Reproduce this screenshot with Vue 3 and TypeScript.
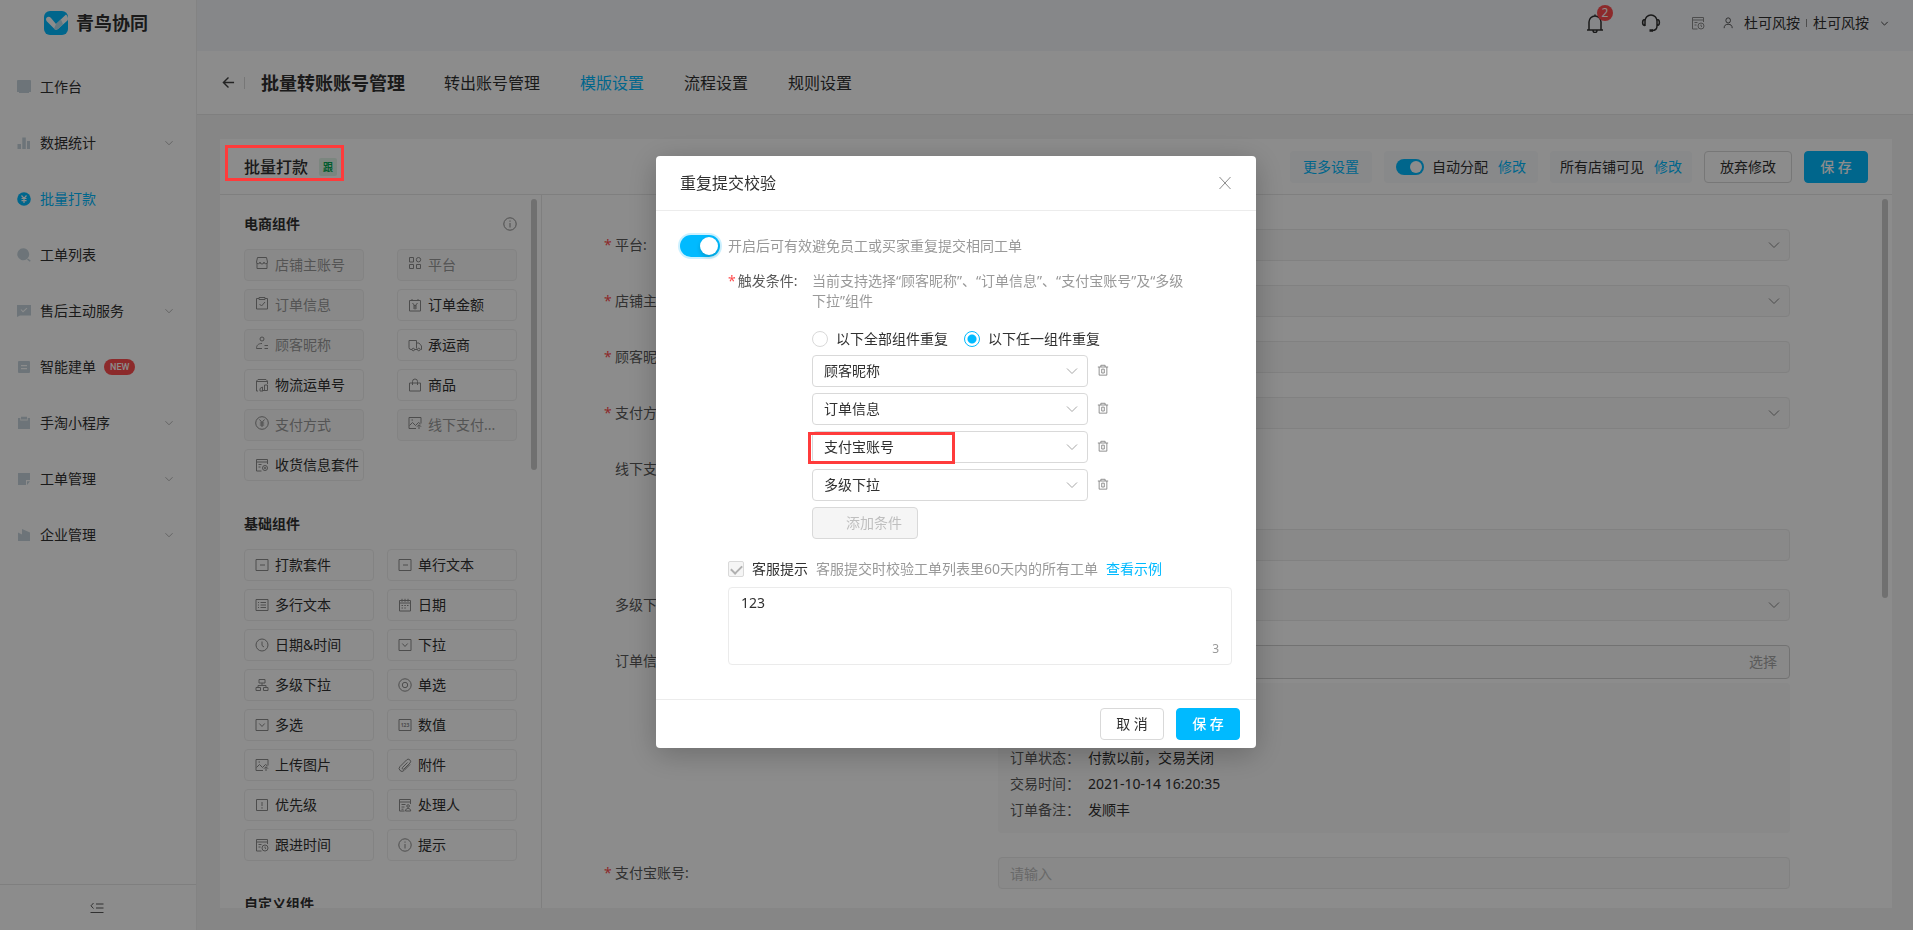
<script setup lang="ts">
import { h, ref } from 'vue'

const glyphs: Record<string, string> = {
  shop: 'M2.500 1.500h9l1 4.500a1.500 1.500 0 0 1-3.500 0 2 2 0 0 1-4 0 1.500 1.500 0 0 1-3.500 0zM2 7V12.500h10V7',
  grid: 'M1.500 1.500H5.500V6H1.500zM8.300 3.700a2.200 2.200 0 1 0 4.400 0a2.200 2.200 0 1 0-4.400 0M1.500 8.500H5.500V12.500H1.500zM8.500 8.500H12.500V12.500H8.500z',
  order: 'M4 2.500H1.500v10.500h11V2.500H10M4 1.500h6V3.500H4zM4.500 8l2 2 3.500-4',
  money: 'M1.500 2.500h11V13h-11zM4 1v2M10 1v2M4.500 5L7 8l2.500-3M7 8v3.500M5 8h4M5 10h4',
  person: 'M5 3a2 2 0 1 0 4 0a2 2 0 1 0-4 0M7 7.500c-4 0-5.500 2-5.500 5H7M9.500 9.500H13M9.500 12.500H13',
  truck: 'M4 11.500H3A2 2 0 0 1 1 9.500v-7h7.500v8M6.500 11.500h3M8.500 5h2.500l2.500 3v3.500h-1M4 11.500a1.200 1.200 0 1 0 2.500 0a1.200 1.200 0 1 0-2.500 0M9.500 11.500a1.300 1.300 0 1 0 2.600 0a1.300 1.300 0 1 0-2.600 0',
  parcel: 'M3 13H1.500V3L3 1.500h8L12.500 3v3M1.500 3.500h11M5 13v-2.500l2.500-1.500v4M7.500 12.500h5V7h-3v5M5 13h3',
  bag: 'M1.500 5h11v8h-11zM4.500 7V3.500a2.500 2.500 0 0 1 5 0V7',
  yen: 'M.7 7a6.300 6.300 0 1 0 12.600 0a6.300 6.300 0 1 0-12.600 0M4.500 3.500L7 6.500l2.500-3M7 6.500V11M4.800 7h4.400M4.800 9h4.400',
  image: 'M8 12.500H1V1.500h12v6M1.500 9.500l3-3 3 3 3-3 2 1.500M3.500 4h1.500M11 13V9M9 10.700l2-2 2 2',
  docgear: 'M6.500 13H1.500V1.500h11V6M1.500 4h11M3.500 6.500h3M3.500 9h2M7.500 10a2.500 2.500 0 1 0 5 0a2.500 2.500 0 1 0-5 0M9.300 10a.7.700 0 1 0 1.400 0a.7.700 0 1 0-1.400 0',
  single: 'M1 1.500h12v11H1zM5 7h5',
  multi: 'M1 1.500h12v11H1zM3 4.500h1M5.500 4.500H11M3 7h1M5.500 7H11M3 9.500h1M5.500 9.500H11',
  date: 'M1.500 2.500h11v10.500h-11zM4 .8v3M7 .8v3M10 .8v3M1.500 5h11M3.500 7.500h1.500M6.300 7.500h1.500M9 7.500h1.500M3.500 10h1.500M6.300 10h1.500',
  clock: 'M1 7a6 6 0 1 0 12 0a6 6 0 1 0-12 0M7 3.500V7.500l2 1.500',
  down: 'M1 1.500h12v11H1zM4.300 5.500L7 8.500l2.700-3',
  tree: 'M4 1.500h6V5H4zM7 5v2.500M3 9.500v-2h8v2M1 9.500h4.500V12.500H1zM8.500 9.500H13v3H8.500z',
  radio: 'M.8 7a6.200 6.200 0 1 0 12.400 0a6.200 6.200 0 1 0-12.400 0M4.300 7a2.700 2.700 0 1 0 5.400 0a2.700 2.700 0 1 0-5.400 0',
  number: 'M1 1.500h12v11H1z',
  clip: 'M9.500 4.500l-5 5a.9.900 0 0 0 1.500 1.500l6-6a2.200 2.200 0 0 0-3.500-3l-6.500 6.500a2.800 2.800 0 0 0 4 4l6-6',
  priority: 'M1.500 1.500h11v11h-11zM7 4v4M7 9.200v1.500',
  handler: 'M6.500 13H1.500V1.500h11V6M1.500 4h11M3.500 6.500h4M3.500 9h3M3.500 11.200h2M8.800 8a1.300 1.300 0 1 0 2.600 0a1.300 1.300 0 1 0-2.600 0M7.500 13c0-3.500 5.200-3.500 5.200 0z',
  follow: 'M6.500 13H1.500V1.500h11V6M1.500 4h11M3.500 6.500h3M3.500 9h2M7 10a3 3 0 1 0 6 0a3 3 0 1 0-6 0M10 8.500V10l1 .8',
  info: 'M.8 7a6.200 6.200 0 1 0 12.400 0a6.200 6.200 0 1 0-12.400 0M7 6v4.500M7 3.500v1.200',
  chevron: 'M2 4.500L7 9.500l5-5',
  trash: 'M1 3.500h12M4.500 3.500v-2h5v2M2.500 3.500V13h9V3.500M5.500 6v4.500h3V6z',
  back: 'M13 7H1.500M7 1.500L1.500 7 7 12.500',
  close: 'M1.500 1l11 12M12.500 1l-11 12',
  fold: 'M6 3h7.500M6 7h7.500M.5 11.500h13M3.500 2L1 4.800l2.500 2.700',
  user: 'M4.500 4a2.700 3 0 1 0 5.400 0a2.700 3 0 1 0-5.400 0M2.500 13c0-3 1.500-4.500 4.700-4.500s4.700 1.500 4.700 4.500'
}

const Glyph = (props: { name: string }) =>
  h(
    'svg',
    { viewBox: '0 0 14 14', fill: 'none', stroke: 'currentColor', 'aria-hidden': 'true' },
    [
      h('path', { d: glyphs[props.name] }),
      props.name === 'number'
        ? h('text', { x: 7, y: 9, 'text-anchor': 'middle', 'font-size': 5, 'font-weight': 700, fill: 'currentColor', stroke: 'none' }, '123')
        : null
    ]
  )
Glyph.props = ['name']

interface MenuItem { label: string; path: string; sub?: boolean; active?: boolean; isNew?: boolean }
const menu: MenuItem[] = [
  { label: '工作台', path: 'M1 0h12a1 1 0 0 1 1 1v11H0V1a1 1 0 0 1 1-1zM2 12h10v1H2z' },
  { label: '数据统计', path: 'M.5 8H4v5H.5zM5.300 1.500h3.500V13H5.300zM10 5h3v8h-3z', sub: true },
  { label: '批量打款', path: 'M7 .2a6.800 6.800 0 1 0 0 13.600A6.800 6.800 0 0 0 7 .2z', active: true },
  { label: '工单列表', path: 'M6.300.3a6 6 0 1 0 3.300 11l1-1A6 6 0 0 0 6.300.300zM11 10.500l2.800 2.300-1 1L10 11.500z' },
  { label: '售后主动服务', path: 'M0 1h14v10.500H3L0 13zM3.500 5.800L6 8.500l4.300-4-.7-.8L6 7.100 4.300 5.200z', sub: true },
  { label: '智能建单', path: 'M2 1h10a1 1 0 0 1 1 1v10a1 1 0 0 1-1 1H2a1 1 0 0 1-1-1V2a1 1 0 0 1 1-1zM4 5v1.200h6V5zM4 8v1.200h6V8z', isNew: true },
  { label: '手淘小程序', path: 'M1 2h2.300V4.500h7.400V2H13V13H1zM4 .8h6v2.700H4z', sub: true },
  { label: '工单管理', path: 'M1 1h12v7H9v5H1zM10 13V9.300h3z', sub: true },
  { label: '企业管理', path: 'M1 4.500L5 6.500V1l8 3.500V13H1z', sub: true }
]

interface Part { label: string; icon: string; off?: boolean }
const shopParts: Part[] = [
  { label: '店铺主账号', icon: 'shop', off: true },
  { label: '平台', icon: 'grid', off: true },
  { label: '订单信息', icon: 'order', off: true },
  { label: '订单金额', icon: 'money' },
  { label: '顾客昵称', icon: 'person', off: true },
  { label: '承运商', icon: 'truck' },
  { label: '物流运单号', icon: 'parcel' },
  { label: '商品', icon: 'bag' },
  { label: '支付方式', icon: 'yen', off: true },
  { label: '线下支付...', icon: 'image', off: true },
  { label: '收货信息套件', icon: 'docgear' }
]
const baseParts: Part[] = [
  { label: '打款套件', icon: 'single' },
  { label: '单行文本', icon: 'single' },
  { label: '多行文本', icon: 'multi' },
  { label: '日期', icon: 'date' },
  { label: '日期&时间', icon: 'clock' },
  { label: '下拉', icon: 'down' },
  { label: '多级下拉', icon: 'tree' },
  { label: '单选', icon: 'radio' },
  { label: '多选', icon: 'down' },
  { label: '数值', icon: 'number' },
  { label: '上传图片', icon: 'image' },
  { label: '附件', icon: 'clip' },
  { label: '优先级', icon: 'priority' },
  { label: '处理人', icon: 'handler' },
  { label: '跟进时间', icon: 'follow' },
  { label: '提示', icon: 'info' }
]

const tabs = ['转出账号管理', '模版设置', '流程设置', '规则设置']
const fields = [
  { id: 'platform', label: '平台', required: true, kind: 'select' },
  { id: 'shop', label: '店铺主账号', required: true, kind: 'select' },
  { id: 'nick', label: '顾客昵称', required: true, kind: 'input' },
  { id: 'pay', label: '支付方式', required: true, kind: 'select' },
  { id: 'proof', label: '线下支付凭证', required: false, kind: 'upload' },
  { id: 'levels', label: '多级下拉', required: false, kind: 'select' }
]
const orderLines = [
  ['订单状态：', '付款以前，交易关闭'],
  ['交易时间：', '2021-10-14 16:20:35'],
  ['订单备注：', '发顺丰']
]

const options = ['顾客昵称', '订单信息', '支付宝账号', '多级下拉']
const chosen = ref([...options])
const mode = ref('any')
const enabled = ref(true)
const autoAssign = ref(true)
const tip = ref('123')
</script>

<template>
  <div class="app">
    <aside class="side">
      <div class="brand">
        <svg class="logo" viewBox="0 0 24 24" aria-hidden="true">
          <rect width="24" height="24" rx="6" fill="#00baff" />
          <path d="M2 8.500C2 5.500 5.500 5 7 7l5 6 10-9.500c2 2 2.500 4.500 1.500 6L14 18c-1.500 1.200-3 1-4-.5L2.500 10z" fill="#fff" />
          <path d="M12 13l5-4.500 2 4.700-5 4.800c-1.500 1.200-3 1-4-.5z" fill="#b9dfef" />
        </svg>
        <span>青鸟协同</span>
      </div>
      <nav class="menu">
        <a v-for="m in menu" :key="m.label" href="#" class="menu-item" :class="{ active: m.active }">
          <svg class="menu-icon" viewBox="0 0 14 14" aria-hidden="true">
            <path :d="m.path" fill="currentColor" fill-rule="evenodd" />
            <path v-if="m.active" d="M4.500 3.500L7 6.300l2.500-2.800M7 6.300V11M4.500 6.500h5M4.500 8.700h5" fill="none" stroke="#fff" stroke-width="1.200" />
          </svg>
          <span>{{ m.label }}</span>
          <em v-if="m.isNew" class="new">NEW</em>
          <Glyph v-if="m.sub" name="chevron" class="caret" />
        </a>
      </nav>
      <button class="fold" aria-label="收起菜单"><Glyph name="fold" class="ico" /></button>
    </aside>

    <div class="main">
      <header class="top">
        <button class="bell" aria-label="通知">
          <svg viewBox="0 0 20 20" fill="none" stroke="currentColor" stroke-width="1.500" aria-hidden="true">
            <path d="M2 17h16M4 17V9a6 6 0 0 1 12 0v8M10 3V1.500M8 17.500a2 2 0 0 0 4 0" />
          </svg>
          <span class="count">2</span>
        </button>
        <button class="headset" aria-label="客服">
          <svg viewBox="0 0 20 20" fill="none" stroke="currentColor" stroke-width="1.500" aria-hidden="true">
            <path d="M4 13V8a6 6 0 0 1 12 0v5c0 3-2 4.500-5 4.500M4 6.500C.8 6.500.8 12.500 4 12.500M16 6.500c3.200 0 3.200 6 0 6" />
            <path d="M8.500 17.500H12" stroke-width="2.500" />
          </svg>
        </button>
        <Glyph name="follow" class="ico top-doc" />
        <button class="account">
          <Glyph name="user" class="ico person" />
          <span>杜可风按</span><i class="bar"></i><span>杜可风按</span>
          <Glyph name="chevron" class="mini" />
        </button>
      </header>

      <div class="titlebar">
        <button class="back" aria-label="返回"><Glyph name="back" class="ico" /></button>
        <h1>批量转账账号管理</h1>
        <nav class="tabs">
          <a v-for="(t, i) in tabs" :key="t" href="#" :class="{ active: i === 1 }">{{ t }}</a>
        </nav>
      </div>

      <section class="card">
        <div class="card-head">
          <div class="card-title">
            <h2>批量打款</h2>
            <span class="tag">跟</span>
            <span class="mark mark-title"></span>
          </div>
          <div class="actions">
            <a href="#" class="pill more">更多设置</a>
            <div class="pill">
              <label class="auto"><input v-model="autoAssign" type="checkbox" role="switch" class="switch small" />自动分配</label>
              <a href="#">修改</a>
            </div>
            <div class="pill scope"><span>所有店铺可见</span><a href="#">修改</a></div>
            <button class="btn wide">放弃修改</button>
            <button class="btn primary">保 存</button>
          </div>
        </div>

        <div class="card-body">
          <div class="palette">
            <div class="group-head"><h3>电商组件</h3><Glyph name="info" class="ico" /></div>
            <div class="parts shop-parts">
              <button v-for="p in shopParts" :key="p.label" class="part" :disabled="p.off">
                <Glyph :name="p.icon" class="ico" /><span>{{ p.label }}</span>
              </button>
            </div>
            <div class="group-head"><h3>基础组件</h3></div>
            <div class="parts base-parts">
              <button v-for="p in baseParts" :key="p.label" class="part">
                <Glyph :name="p.icon" class="ico" /><span>{{ p.label }}</span>
              </button>
            </div>
            <div class="group-head"><h3>自定义组件</h3></div>
            <i class="thumb thumb-left"></i>
          </div>

          <form class="form" @submit.prevent>
            <div v-for="f in fields" :key="f.id" class="row" :class="f.kind">
              <label :for="f.id"><b>{{ f.required ? '*' : '' }}</b>{{ f.label }}:</label>
              <div class="field">
                <select v-if="f.kind === 'select'" :id="f.id" disabled></select>
                <input v-else :id="f.id" type="text" disabled />
                <Glyph v-if="f.kind === 'select'" name="chevron" class="arrow" />
              </div>
            </div>
            <div class="row">
              <label for="order"><b></b>订单信息:</label>
              <div>
                <button id="order" class="pick" type="button" disabled>选择</button>
                <dl class="detail">
                  <div v-for="l in orderLines" :key="l[0]"><dt>{{ l[0] }}</dt><dd>{{ l[1] }}</dd></div>
                </dl>
              </div>
            </div>
            <div class="row">
              <label for="alipay"><b>*</b>支付宝账号:</label>
              <div class="field"><input id="alipay" type="text" placeholder="请输入" disabled /></div>
            </div>
            <i class="thumb thumb-right"></i>
          </form>
        </div>
      </section>
    </div>

    <div class="mask">
      <div class="modal" role="dialog" aria-modal="true" aria-labelledby="dlg-title">
        <div class="modal-head">
          <h2 id="dlg-title">重复提交校验</h2>
          <button class="close" aria-label="关闭"><Glyph name="close" class="ico" /></button>
        </div>
        <div class="modal-body">
          <label class="enable">
            <input v-model="enabled" type="checkbox" role="switch" class="switch" />
            <span>开启后可有效避免员工或买家重复提交相同工单</span>
          </label>
          <div class="cond">
            <div class="cond-label"><b>*</b>触发条件:</div>
            <div>
              <p class="hint">当前支持选择“顾客昵称”、“订单信息”、“支付宝账号”及“多级下拉”组件</p>
              <div class="radios">
                <label><input v-model="mode" type="radio" name="mode" value="all" />以下全部组件重复</label>
                <label><input v-model="mode" type="radio" name="mode" value="any" />以下任一组件重复</label>
              </div>
              <div class="rules">
                <div v-for="(c, i) in chosen" :key="i" class="rule">
                  <div class="field">
                    <select v-model="chosen[i]" :aria-label="'条件' + (i + 1)">
                      <option v-for="o in options" :key="o">{{ o }}</option>
                    </select>
                    <Glyph name="chevron" class="arrow" />
                    <span v-if="i === 2" class="mark mark-rule"></span>
                  </div>
                  <button class="trash" aria-label="删除"><Glyph name="trash" class="ico" /></button>
                </div>
                <button class="btn add" disabled>添加条件</button>
              </div>
            </div>
          </div>
          <div class="notice">
            <label><input type="checkbox" class="tick" checked disabled />客服提示</label>
            <span>客服提交时校验工单列表里60天内的所有工单</span>
            <a href="#">查看示例</a>
          </div>
          <div class="area">
            <textarea v-model="tip" aria-label="客服提示内容"></textarea>
            <span>{{ tip.length }}</span>
          </div>
        </div>
        <div class="modal-foot">
          <button class="btn">取 消</button>
          <button class="btn primary">保 存</button>
        </div>
      </div>
    </div>
  </div>
</template>

<style>
body { margin: 0; overflow: hidden; }
</style>

<style scoped>
.app {
  --blue: #00baff;
  display: flex;
  height: 100vh;
  font: 14px/20px "Noto Sans", "Noto Sans CJK SC", sans-serif;
  color: #303030;
}
.app * { box-sizing: border-box; }
h1, h2, h3, p, dl, dd { margin: 0; }
a { color: var(--blue); text-decoration: none; }
button, input, select, textarea { font: inherit; color: inherit; }
button { padding: 0; border: 0; background: none; }
b { color: #ff4d4f; font-weight: 400; }
.ico { width: 14px; height: 14px; flex: none; color: #8c8c8c; }

.side { width: 197px; flex: none; display: flex; flex-direction: column; background: #fff; border-right: 1px solid #efefef; }
.brand { display: flex; align-items: center; gap: 8px; height: 46px; margin-bottom: 13px; padding-left: 44px; font-size: 18px; font-weight: 700; }
.logo { width: 24px; height: 24px; }
.menu { flex: 1; }
.menu-item { display: flex; align-items: center; height: 56px; padding: 0 22px 0 17px; color: #303030; }
.menu-icon { width: 14px; height: 14px; margin-right: 9px; color: #c6d4dc; }
.menu-item.active, .menu-item.active .menu-icon { color: var(--blue); }
.caret { width: 10px; height: 10px; margin-left: auto; color: #999; }
.new { margin-left: 8px; padding: 0 6px; border-radius: 8px; background: #ff4d4f; color: #fff; font: 500 9px/16px Roboto, sans-serif; }
.fold { height: 46px; padding-right: 2px; border-top: 1px solid #e8e8e8; }
.fold .ico { color: #595959; margin-top: 6px; }

.main { flex: 1; min-width: 0; display: flex; flex-direction: column; background: #f5f5f5; }
.top { display: flex; align-items: center; justify-content: flex-end; height: 51px; padding: 0 24px 6px 0; background: #f4f6fa; flex: none; }
.bell { position: relative; width: 20px; height: 20px; margin-right: 36px; }
.headset { width: 20px; height: 20px; margin-right: 30px; }
.bell svg, .headset svg { width: 20px; height: 20px; display: block; }
.count { position: absolute; left: 12px; top: -8px; width: 16px; height: 16px; border-radius: 8px; background: #ff4d4f; color: #fff; font-size: 12px; line-height: 16px; text-align: center; }
.top-doc { margin-right: 16px; }
.account { display: flex; align-items: center; }
.account .person { margin-right: 9px; color: #404040; width: 14px; height: 12px; }
.bar { width: 1px; height: 8px; margin: 0 6px; background: #8c8c8c; }
.mini { width: 9px; height: 9px; margin: 2px 0 0 11px; color: #404040; stroke-width: 1.500; }

.titlebar { display: flex; align-items: center; height: 64px; flex: none; padding-left: 25px; background: #fff; border-bottom: 1px solid #e8e8e8; }
.back { display: flex; align-items: center; height: 12px; padding-right: 9px; border-right: 1px solid #d9d9d9; }
.back .ico { width: 13px; height: 13px; color: #404040; stroke-width: 1.500; }
h1 { margin-left: 16px; font-size: 18px; line-height: 28px; font-weight: 700; }
.tabs { display: flex; gap: 40px; margin-left: 39px; font-size: 16px; }
.tabs a { color: #303030; }
.tabs a.active { color: var(--blue); }

.card { flex: 1; min-height: 0; display: flex; flex-direction: column; margin: 24px 21px 22px 23px; background: #fff; }
.card-head { display: flex; align-items: center; justify-content: space-between; height: 56px; flex: none; padding: 0 24px; border-bottom: 1px solid #e8e8e8; }
.card-title { position: relative; display: flex; align-items: center; gap: 11px; }
.card-title h2 { font-size: 16px; line-height: 24px; font-weight: 500; }
.tag { width: 18px; height: 18px; border-radius: 2px; background: #e1f5e8; color: #00a854; font-size: 10px; line-height: 18px; font-weight: 700; text-align: center; }
.mark { position: absolute; z-index: 20; border: 3px solid #ff3b3b; pointer-events: none; }
.mark-title { left: -19px; top: -10px; width: 119px; height: 36px; }
.actions { display: flex; gap: 12px; }
.pill { display: flex; align-items: center; gap: 10px; height: 32px; padding: 0 12px; border-radius: 4px; background: #f7f9fb; }
.pill.more { padding: 0 13px; }
.pill.scope { padding: 0 10px; }
.auto { display: flex; align-items: center; gap: 8px; }
.btn { min-width: 64px; height: 32px; padding: 0 14px; border: 1px solid #d9d9d9; border-radius: 4px; background: #fff; }
.btn.wide { padding: 0 15px; }
.btn.primary { border-color: var(--blue); background: var(--blue); color: #fff; font-weight: 500; }

.switch { appearance: none; display: flex; align-items: center; width: 40px; height: 22px; margin: 0; padding: 2px; flex: none; border-radius: 11px; background: #bfbfbf; box-shadow: 0 0 0 2px #ccf1ff; }
.switch::before { content: ''; width: 18px; height: 18px; border-radius: 50%; background: #fff; box-shadow: 0 2px 4px rgba(0, 35, 11, .2); }
.switch:checked { background: var(--blue); justify-content: flex-end; }
.switch.small { width: 28px; height: 16px; box-shadow: none; }
.switch.small::before { width: 12px; height: 12px; box-shadow: none; }

.card-body { flex: 1; min-height: 0; display: flex; }
.palette { position: relative; width: 322px; flex: none; padding: 19px 24px 0; border-right: 1px solid #e8e8e8; overflow: hidden; }
.group-head { display: flex; align-items: center; justify-content: space-between; height: 20px; margin-bottom: 15px; }
h3 { font-size: 14px; line-height: 20px; font-weight: 700; }
.parts { display: grid; row-gap: 8px; margin-bottom: 33px; }
.shop-parts { grid-template-columns: 120px 120px; justify-content: space-between; }
.base-parts { grid-template-columns: 130px 130px; justify-content: space-between; }
.part { display: flex; align-items: center; gap: 6px; height: 32px; padding: 0 3px 0 10px; border: 1px solid #efefef; border-radius: 4px; background: #fff; white-space: nowrap; }
.part:disabled { background: #fafafa; color: #999; }
.part:disabled .ico { margin-bottom: 4px; }
.thumb { position: absolute; width: 6px; border-radius: 3px; background: #cdcdcd; top: 4px; }
.thumb-left { right: 4px; height: 38%; }
.thumb-right { right: 4px; height: 56%; }

.form { position: relative; flex: 1; min-width: 0; display: flex; flex-direction: column; gap: 24px; padding: 34px 102px 0 62px; overflow: hidden; }
.row { display: grid; grid-template-columns: 394px 1fr; }
.row > label { display: flex; height: 32px; align-items: center; color: #595959; }
.row > label b { width: 11px; }
.field { position: relative; display: grid; align-items: center; }
.field select, .field input { grid-area: 1 / 1; appearance: none; width: 100%; height: 32px; margin: 0; padding: 0 11px; border: 1px solid #ebebeb; border-radius: 4px; background: #f9f9f9; opacity: 1; }
.field input::placeholder { color: #bfbfbf; }
.arrow { grid-area: 1 / 1; justify-self: end; width: 14px; height: 14px; margin-right: 9px; color: #8c8c8c; pointer-events: none; }
.row.upload { margin-bottom: 4px; }
.row.upload .field { padding-top: 76px; }
.pick { display: block; width: 100%; height: 34px; padding: 0 12px; border: 1px solid #d0d0d0; border-radius: 4px; background: #f9f9f9; color: #a6a6a6; text-align: right; }
.detail { display: flex; flex-direction: column; justify-content: flex-end; min-height: 150px; margin-top: 4px; padding: 10px 12px; border-radius: 4px; background: #f9f9f9; line-height: 26px; }
.detail div { display: flex; gap: 8px; }
.detail dt { color: #595959; }

.mask { position: fixed; inset: 0; z-index: 10; display: flex; flex-direction: column; align-items: center; padding: 156px 1px 0 0; background: rgba(0, 0, 0, .45); }
.modal { width: 600px; max-width: 100%; border-radius: 4px; background: #fff; box-shadow: 0 6px 30px rgba(0, 0, 0, .24); }
.modal-head { display: flex; align-items: center; justify-content: space-between; height: 55px; padding: 0 24px; border-bottom: 1px solid #ececec; }
.modal-head h2 { font-size: 16px; line-height: 24px; font-weight: 400; }
.close { display: flex; }
.modal-body { padding: 24px 24px 34px; }
.enable { display: flex; align-items: center; gap: 8px; height: 22px; color: #999; }
.cond { display: grid; grid-template-columns: 84px 1fr; margin: 14px 0 0 48px; }
.cond-label { color: #595959; }
.cond-label b { margin-right: 2px; }
.hint { max-width: 376px; margin-bottom: 12px; color: #999; }
.radios { display: flex; align-items: center; gap: 16px; height: 32px; }
.radios label { display: flex; align-items: center; gap: 8px; }
.radios input { appearance: none; width: 16px; height: 16px; margin: 0; border: 1px solid #d9d9d9; border-radius: 50%; background: #fff; }
.radios input:checked { border-color: var(--blue); background: radial-gradient(circle, var(--blue) 4px, #fff 5px); }
.rules { display: flex; flex-direction: column; align-items: flex-start; gap: 6px; }
.rule { display: flex; align-items: center; gap: 9px; }
.rule .field { width: 276px; }
.rule select { border-color: #d9d9d9; background: #fff; }
.rule .arrow { color: #a6a6a6; }
.trash { display: flex; padding-bottom: 2px; }
.trash .ico { width: 12px; height: 12px; color: #808080; }
.mark-rule { left: -4px; top: 1px; width: 147px; height: 32px; }
.add { width: 106px; padding: 0 15px; background: #f5f5f5; color: #bfbfbf; text-align: right; }
.notice { display: flex; align-items: center; gap: 8px; height: 20px; margin: 20px 0 8px 48px; color: #999; }
.notice label { display: flex; align-items: center; gap: 8px; color: #303030; }
.tick { appearance: none; width: 16px; height: 16px; margin: 0; border: 1px solid #d9d9d9; border-radius: 2px; background: #f5f5f5; display: grid; place-items: center; }
.tick::before { content: ''; width: 5px; height: 9px; margin-bottom: 2px; border: solid #b0b0b0; border-width: 0 2px 2px 0; transform: rotate(45deg); }
.area { position: relative; margin-left: 48px; height: 78px; }
.area textarea { display: block; width: 100%; height: 78px; padding: 5px 12px; border: 1px solid #ebebeb; border-radius: 4px; resize: none; outline: 0; }
.area span { position: absolute; right: 13px; bottom: 6px; color: #999; font-size: 12px; }
.modal-foot { display: flex; justify-content: flex-end; gap: 12px; padding: 8px 16px; border-top: 1px solid #ececec; }
</style>
